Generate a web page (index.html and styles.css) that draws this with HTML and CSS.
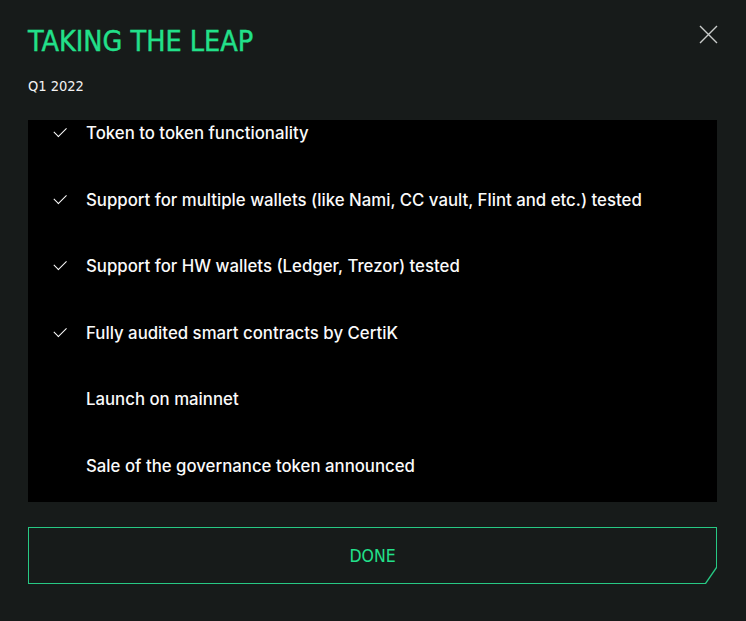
FILE: index.html
```html
<!DOCTYPE html>
<html lang="en">
<head>
  <meta charset="UTF-8">
  <meta name="viewport" content="width=device-width, initial-scale=1.0">
  <title>Roadmap</title>
  <link rel="stylesheet" href="styles.css">
</head>
<body>
  <div class="modal">
    <div class="modal-head">
      <div>
        <h1 class="title">TAKING THE LEAP</h1>
        <div class="quarter">Q1 2022</div>
      </div>
      <button class="close" aria-label="close">
        <svg width="19" height="19" viewBox="0 0 19 19">
          <path d="M1 1 L18 18 M18 1 L1 18" stroke="#c9cccb" stroke-width="1.4" fill="none"/>
        </svg>
      </button>
    </div>

    <div class="goals">
      <ul class="goal-list">
        <li class="goal done">Token to token functionality</li>
        <li class="goal done">Support for multiple wallets (like Nami, CC vault, Flint and etc.) tested</li>
        <li class="goal done">Support for HW wallets (Ledger, Trezor) tested</li>
        <li class="goal done">Fully audited smart contracts by CertiK</li>
        <li class="goal">Launch on mainnet</li>
        <li class="goal">Sale of the governance token announced</li>
      </ul>
    </div>

    <button class="done-btn"><span class="done-inner">DONE</span></button>
  </div>
</body>
</html>
```

FILE: styles.css
```css
body{
  margin: 0;
  background: #171b1a;
  font-family: "Inter", "Liberation Sans", sans-serif;
  color: #fff;
}
.modal{
  display: flex;
  flex-direction: column;
  padding: 24px 29px 0 28px;
}
.modal-head{
  display: flex;
  justify-content: space-between;
  align-items: flex-start;
}
.title{
  margin: 0;
  font-family: "DejaVu Sans", sans-serif;
  font-stretch: condensed;
  font-weight: 400;
  font-size: 28.5px;
  line-height: 36px;
  color: #22e08a;
  -webkit-text-stroke: 0.4px #22e08a;
}
.quarter{
  margin-top: 16px;
  font-family: "DejaVu Sans", sans-serif;
  font-stretch: condensed;
  font-size: 14.5px;
  line-height: 20px;
  color: #f2f2f2;
}
.close{
  background: none;
  border: 0;
  padding: 0;
  margin: 1px -1px 0 0;
  cursor: pointer;
}
.goals{
  margin-top: 24px;
  background: #000;
  height: 382px;
  overflow: hidden;
}
.goal-list{
  list-style: none;
  margin: 0;
  padding: 0 0 0 58px;
  display: flex;
  flex-direction: column;
  gap: 40.6px;
}
.goal{
  position: relative;
  font-size: 16.8px;
  font-weight: 500;
  line-height: 26px;
  color: #fafafa;
}
.goal.done::before{
  content: "";
  position: absolute;
  left: -32px;
  top: 7px;
  width: 11px;
  height: 5.5px;
  border-left: 1.8px solid #fff;
  border-bottom: 1.8px solid #fff;
  transform: rotate(-45deg);
}
.done-btn{
  margin-top: 25px;
  height: 57px;
  padding: 1px;
  border: 0;
  background: #27c984;
  clip-path: polygon(0 0, 100% 0, 100% calc(100% - 16px), calc(100% - 11px) 100%, 0 100%);
  cursor: pointer;
  display: flex;
}
.done-inner{
  flex: 1;
  display: flex;
  align-items: center;
  justify-content: center;
  background: #171b1a;
  clip-path: polygon(0 0, 100% 0, 100% calc(100% - 16px), calc(100% - 11px) 100%, 0 100%);
  font-family: "DejaVu Sans", sans-serif;
  font-stretch: condensed;
  font-size: 17.5px;
  color: #22e08a;
}
```
